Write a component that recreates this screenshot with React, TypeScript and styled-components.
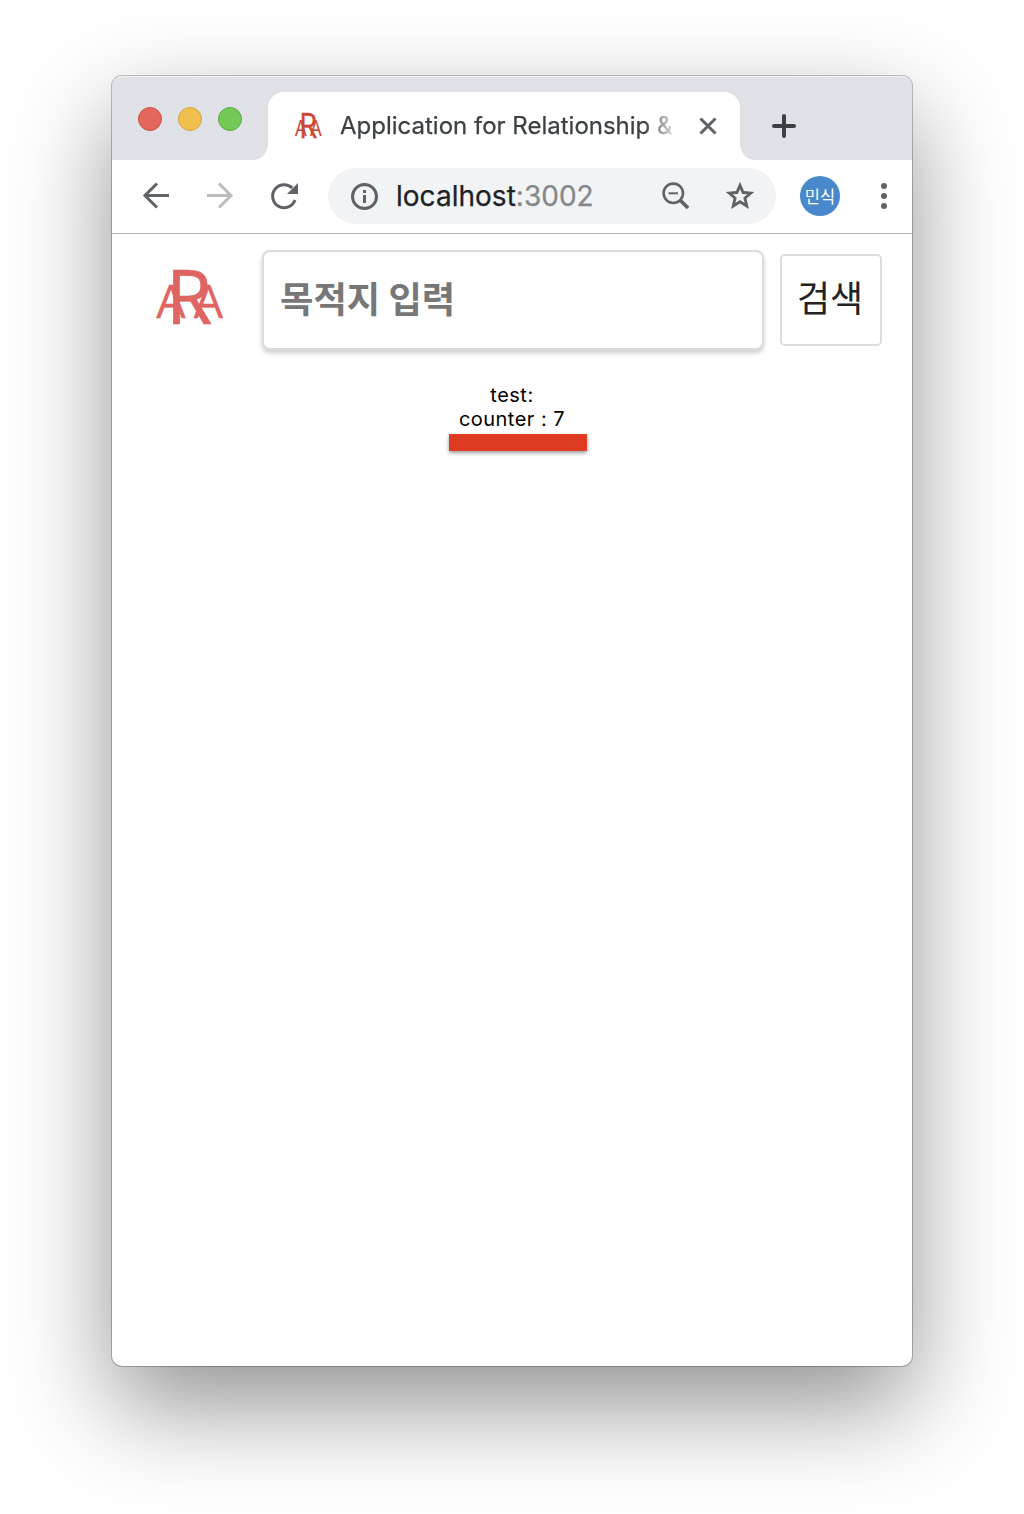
import React from "react";
import styled, { createGlobalStyle } from "styled-components";

const Global = createGlobalStyle`
  * { box-sizing: border-box; }
  body { margin: 0; background: #fff; font-family: Inter, "Noto Sans CJK KR", sans-serif; }
`;

const Desktop = styled.div`
  height: 1514px;
  padding: 76px 112px 0;
  overflow: hidden;
`;

const Window = styled.div`
  display: flex;
  flex-direction: column;
  height: 1290px;
  border-radius: 10px;
  background: #fff;
  box-shadow: 0 0 0 1px rgba(0, 0, 0, 0.24), 0 40px 100px rgba(0, 0, 0, 0.43);
`;

const TabStrip = styled.div`
  display: flex;
  align-items: flex-end;
  height: 84px;
  border-radius: 10px 10px 0 0;
  background: #dfe1e6;
  box-shadow: inset 0 2px 0 -1px #f2f3f5;
`;

const Lights = styled.div`
  display: flex;
  align-self: flex-start;
  gap: 16px;
  width: 156px;
  padding: 31px 0 0 26px;
`;

const Light = styled.span<{ $fill: string; $edge: string }>`
  width: 24px;
  height: 24px;
  border: 1px solid ${(p) => p.$edge};
  border-radius: 50%;
  background: ${(p) => p.$fill};
`;

const Tab = styled.div`
  position: relative;
  display: flex;
  align-items: center;
  width: 472px;
  height: 68px;
  padding-left: 27px;
  border-radius: 16px 16px 0 0;
  background: #fff;

  &::before,
  &::after {
    content: "";
    position: absolute;
    bottom: 0;
    width: 16px;
    height: 16px;
  }
  &::before {
    left: -16px;
    background: radial-gradient(circle at 0 0, transparent 15.5px, #fff 16.5px);
  }
  &::after {
    right: -16px;
    background: radial-gradient(circle at 100% 0, transparent 15.5px, #fff 16.5px);
  }
`;

const TabTitle = styled.span`
  width: 342px;
  margin-left: 18px;
  overflow: hidden;
  white-space: nowrap;
  font-size: 24px;
  line-height: 32px;
  letter-spacing: 0;
  color: #3c4043;
  -webkit-text-stroke: 0.25px currentColor;
  mask-image: linear-gradient(to right, #000 304px, transparent 340px);
`;

const IconButton = styled.button<{ $ml?: number; $color?: string }>`
  display: flex;
  flex: none;
  margin: 0 0 0 ${(p) => p.$ml ?? 0}px;
  padding: 0;
  border: 0;
  background: none;
  color: ${(p) => p.$color ?? "#5f6368"};
`;

const NewTab = styled(IconButton)`
  align-self: center;
  padding-top: 16px;
`;

const Toolbar = styled.div`
  display: flex;
  align-items: center;
  height: 74px;
  padding: 0 12px 2px 28px;
  border-bottom: 1px solid #b5b5b6;
`;

const Address = styled.div`
  display: flex;
  align-items: center;
  width: 448px;
  height: 56px;
  margin-left: 28px;
  padding: 0 20px;
  border-radius: 28px;
  background: #f1f3f4;
`;

const Url = styled.span`
  flex: 1;
  margin-left: 16px;
  font-size: 28px;
  line-height: 36px;
  letter-spacing: 0.02px;
  color: #202124;
  -webkit-text-stroke: 0.25px currentColor;
`;

const Port = styled.span`
  color: #85878c;
`;

const Avatar = styled.span`
  display: flex;
  align-items: center;
  justify-content: center;
  width: 40px;
  height: 40px;
  margin-left: 24px;
  border-radius: 50%;
  background: #4a88cc;
  color: #fff;
  font: 400 16.5px/24px "Noto Sans CJK KR", sans-serif;
`;

const SearchBar = styled.header`
  display: flex;
  align-items: center;
  height: 132px;
  padding: 0 30px 0 44px;
`;

const LogoLink = styled.a`
  display: flex;
  flex: none;
  padding-bottom: 6px;
`;

const LogoDrawing = styled.svg`
  flex: none;
  overflow: visible;
`;

const DestinationInput = styled.input`
  width: 502px;
  height: 100px;
  margin-left: 38px;
  padding: 0 16px 6px;
  border: 2px solid #dcdcdc;
  border-radius: 8px;
  outline: 0;
  box-shadow: 0 3px 5px rgba(0, 0, 0, 0.2);
  font: 700 36.3px/50px "Noto Sans CJK KR", sans-serif;
  &::placeholder {
    color: #777;
    opacity: 1;
  }
`;

const SearchButton = styled.button`
  width: 102px;
  height: 92px;
  margin-left: 16px;
  padding: 0 2px 8px 0;
  border: 2px solid #dcdcdc;
  border-radius: 5px;
  background: #fff;
  color: #222;
  font: 400 36px/50px "Noto Sans CJK KR", sans-serif;
`;

const Counter = styled.main`
  display: flex;
  flex-direction: column;
  align-items: center;
  padding-top: 17px;
  color: #000;
  font-size: 20px;
  line-height: 24px;
  letter-spacing: 0.48px;
`;

const Meter = styled.div`
  width: 138px;
  height: 17px;
  margin: 3px 0 0 12px;
  background: #de3c22;
  box-shadow: 0 2px 4px rgba(0, 0, 0, 0.4);
`;

function Logo({ width, height, color }: { width: number; height: number; color: string }) {
  return (
    <LogoDrawing
      width={width}
      height={height}
      viewBox="0 0 68 56"
      preserveAspectRatio="none"
      fill={color}
      stroke={color}
      strokeWidth="0.3"
      fontFamily="Open Sans, sans-serif"
    >
      <text x="0.3" y="49" fontSize="46.500">A</text>
      <text x="10" y="54.700" fontSize="75" strokeWidth="0.6">R</text>
      <text x="37.700" y="49" fontSize="46.500">A</text>
    </LogoDrawing>
  );
}

const stroke = { fill: "none", stroke: "currentColor" } as const;

export default function App() {
  return (
    <>
      <Global />
      <Desktop>
        <Window>
          <TabStrip>
            <Lights>
              <Light $fill="#e3675b" $edge="#cc5147" />
              <Light $fill="#f0c04f" $edge="#d6a243" />
              <Light $fill="#73c857" $edge="#58aa42" />
            </Lights>
            <Tab>
              <Logo width={27} height={26} color="#cc4635" />
              <TabTitle>Application for Relationship &amp; A</TabTitle>
              <IconButton $ml={12} aria-label="Close tab">
                <svg width="28" height="28" viewBox="0 0 28 28" {...stroke} strokeWidth="3">
                  <path d="M6.500 6.500l15 15M21.500 6.500l-15 15" />
                </svg>
              </IconButton>
            </Tab>
            <NewTab $ml={32} $color="#3c4043" aria-label="New tab">
              <svg width="24" height="24" viewBox="0 0 24 24" {...stroke} strokeWidth="4" strokeLinecap="round">
                <path d="M2 12h20M12 2v20" />
              </svg>
            </NewTab>
          </TabStrip>
          <Toolbar>
            <IconButton aria-label="Back">
              <svg width="32" height="32" viewBox="0 0 32 32" {...stroke} strokeWidth="3">
                <path d="M29 15.500H4.500M17 3.500L5 15.500l12 12" />
              </svg>
            </IconButton>
            <IconButton $ml={32} $color="#babcbe" aria-label="Forward">
              <svg width="32" height="32" viewBox="0 0 32 32" {...stroke} strokeWidth="3">
                <path d="M3 15.500h24.500M15 3.500l12 12-12 12" />
              </svg>
            </IconButton>
            <IconButton $ml={32} aria-label="Reload">
              <svg width="32" height="32" viewBox="0 0 32 32" {...stroke} strokeWidth="3">
                <path d="M27 20a11.500 11.500 0 1 1-2.800-12" />
                <path d="M30 3v11H19z" fill="currentColor" stroke="none" />
              </svg>
            </IconButton>
            <Address>
              <IconButton aria-label="Site information">
                <svg width="32" height="32" viewBox="0 0 32 32" {...stroke} strokeWidth="3">
                  <circle cx="16.500" cy="16.500" r="12" />
                  <path d="M16.500 15v8M16.500 10v3" />
                </svg>
              </IconButton>
              <Url>
                localhost<Port>:3002</Port>
              </Url>
              <IconButton aria-label="Zoom">
                <svg width="32" height="32" viewBox="0 0 32 32" {...stroke}>
                  <circle cx="13.300" cy="13.300" r="9.700" strokeWidth="2.600" />
                  <path d="M8.500 13.300h9.500" strokeWidth="2" />
                  <path d="M20 20l8 8" strokeWidth="3.800" />
                </svg>
              </IconButton>
              <IconButton $ml={32} aria-label="Bookmark">
                <svg width="32" height="32" viewBox="0 0 32 32" fill="currentColor">
                  <path
                    fillRule="evenodd"
                    d="M16 1.700l4 9.300 10.300.9-7.800 6.700 2.400 10.400L16 23.600 7.100 29l2.400-10.400-7.800-6.700L12 11zM16 9l-2.100 4.900-5.200.4 4 3.400-1.300 5.200 4.600-2.800 4.600 2.800-1.300-5.200 4-3.400-5.200-.4z"
                  />
                </svg>
              </IconButton>
            </Address>
            <Avatar>민식</Avatar>
            <IconButton $ml={28} aria-label="Menu">
              <svg width="32" height="32" viewBox="0 0 32 32" fill="currentColor">
                <circle cx="16" cy="6" r="3" />
                <circle cx="16" cy="16" r="3" />
                <circle cx="16" cy="26" r="3" />
              </svg>
            </IconButton>
          </Toolbar>
          <SearchBar>
            <LogoLink>
              <Logo width={68} height={56} color="#df6563" />
            </LogoLink>
            <DestinationInput placeholder="목적지 입력" />
            <SearchButton>검색</SearchButton>
          </SearchBar>
          <Counter>
            <span>test:</span>
            <span>counter : 7</span>
            <Meter />
          </Counter>
        </Window>
      </Desktop>
    </>
  );
}
